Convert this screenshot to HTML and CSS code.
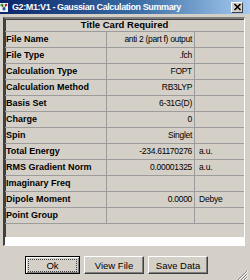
FILE: index.html
```html
<!DOCTYPE html>
<html lang="en">
<head>
    <meta charset="UTF-8">
    <title>Gaussian Calculation Summary</title>
    <link rel="stylesheet" href="styles.css">
</head>
<body>
    <div class="titlebar">
        <svg class="app-icon" width="9" height="11" viewBox="0 0 9 11">
            <rect x="0" y="1" width="8" height="9" fill="#f4f4f4"/>
            <circle cx="2" cy="3" r="1.6" fill="#2fa82f"/>
            <circle cx="6" cy="3" r="1.3" fill="#d03030"/>
            <circle cx="4" cy="7" r="1.6" fill="#2f5fd0"/>
            <line x1="2" y1="3" x2="4" y2="7" stroke="#333" stroke-width="0.8"/>
            <line x1="6" y1="3" x2="4" y2="7" stroke="#333" stroke-width="0.8"/>
        </svg>
        <span class="title">G2:M1:V1 - Gaussian Calculation Summary</span>
        <span class="close">
            <svg width="9" height="8" viewBox="0 0 9 8">
                <path d="M1.5 1 L7.5 7 M7.5 1 L1.5 7" stroke="#000" stroke-width="1.6"/>
            </svg>
        </span>
    </div>

    <div class="frame">
        <div class="grid">
            <div class="head">Title Card Required</div>
            <div class="rows">
                <div class="lbl">File Name</div><div class="val">anti 2 (part f) output</div><div class="unit"></div>
                <div class="lbl">File Type</div><div class="val">.fch</div><div class="unit"></div>
                <div class="lbl">Calculation Type</div><div class="val">FOPT</div><div class="unit"></div>
                <div class="lbl">Calculation Method</div><div class="val">RB3LYP</div><div class="unit"></div>
                <div class="lbl">Basis Set</div><div class="val">6-31G(D)</div><div class="unit"></div>
                <div class="lbl">Charge</div><div class="val">0</div><div class="unit"></div>
                <div class="lbl">Spin</div><div class="val">Singlet</div><div class="unit"></div>
                <div class="lbl">Total Energy</div><div class="val">-234.61170276</div><div class="unit">a.u.</div>
                <div class="lbl">RMS Gradient Norm</div><div class="val">0.00001325</div><div class="unit">a.u.</div>
                <div class="lbl">Imaginary Freq</div><div class="val"></div><div class="unit"></div>
                <div class="lbl">Dipole Moment</div><div class="val">0.0000</div><div class="unit">Debye</div>
                <div class="lbl">Point Group</div><div class="val"></div><div class="unit"></div>
            </div>
            <div class="filler"></div>
            <div class="blank"></div>
        </div>

        <div class="buttons">
            <button class="btn default"><span>Ok</span></button>
            <button class="btn wide">View File</button>
            <button class="btn wide">Save Data</button>
        </div>

        <svg class="grip" width="11" height="11" viewBox="0 0 11 11">
            <path d="M10 1 L1 10 M10 4 L4 10 M10 7 L7 10" stroke="#808080" stroke-width="1"/>
            <path d="M11 1 L2 10 M11 4 L5 10 M11 7 L8 10" stroke="#fff" stroke-width="1"/>
        </svg>
    </div>
</body>
</html>
```

FILE: styles.css
```css
body {
    margin: 0;
    width: 250px;
    height: 280px;
    overflow: hidden;
    background-color: #d4d0c8;
    font-family: "Liberation Sans", Arial, sans-serif;
    color: #000;
}
.titlebar {
    height: 14px;
    display: flex;
    align-items: center;
    padding: 0 7px 0 0;
    background: linear-gradient(to right, #0a246a, #3a6ea5 55%, #a6caf0);
}
.app-icon {
    margin-right: 3px;
}
.title {
    flex: 1;
    color: #fff;
    font-weight: bold;
    font-size: 9px;
    letter-spacing: -0.4px;
    white-space: nowrap;
}
.close {
    width: 10px;
    height: 9px;
    display: flex;
    align-items: center;
    justify-content: center;
    background: #d4d0c8;
    border-top: 1px solid #fff;
    border-left: 1px solid #fff;
    border-right: 1px solid #404040;
    border-bottom: 1px solid #404040;
}
.frame {
    position: relative;
    height: 266px;
    padding: 3px 5px 0 3px;
}
.grid {
    border-top: 2px solid #808080;
    border-left: 2px solid #404040;
    border-right: 1px solid #fff;
    border-bottom: 1px solid #fff;
    box-shadow: inset 1px 1px 0 #404040;
}
.head {
    height: 12px;
    line-height: 12px;
    border-bottom: 1px solid #9c9c9c;
    text-align: center;
    font-weight: bold;
    font-size: 9.5px;
}
.rows {
    display: grid;
    grid-template-columns: 102px 88px 1fr;
    grid-auto-rows: 16px;
}
.rows div {
    box-sizing: border-box;
    border-bottom: 1px solid #9c9c9c;
    line-height: 15px;
    white-space: nowrap;
    overflow: hidden;
}
.lbl {
    padding-left: 1px;
    font-weight: bold;
    font-size: 9px;
    border-right: 1px solid #9c9c9c;
}
.val {
    padding-right: 2px;
    text-align: right;
    font-size: 8.5px;
    letter-spacing: -0.3px;
    border-right: 1px solid #9c9c9c;
}
.unit {
    padding-left: 4px;
    font-size: 8.5px;
    letter-spacing: -0.2px;
}
.filler {
    height: 13px;
}
.blank {
    height: 8px;
    background: #fff;
}
.buttons {
    display: flex;
    gap: 4px;
    padding: 10px 0 0 22px;
}
.btn {
    box-sizing: border-box;
    height: 18px;
    padding: 0;
    background: #d4d0c8;
    font-family: "Liberation Sans", Arial, sans-serif;
    font-size: 9.5px;
    color: #000;
    border-top: 1px solid #fff;
    border-left: 1px solid #fff;
    border-right: 1px solid #404040;
    border-bottom: 1px solid #404040;
    box-shadow: inset -1px -1px 0 #808080;
}
.default {
    width: 55px;
    border: 1px solid #000;
    box-shadow: inset 1px 1px 0 #fff, inset -1px -1px 0 #808080;
}
.default span {
    display: block;
    margin: 2px;
    line-height: 11px;
    border: 1px dotted #404040;
}
.wide {
    width: 60px;
}
.grip {
    position: absolute;
    right: 2px;
    bottom: 2px;
}
```
